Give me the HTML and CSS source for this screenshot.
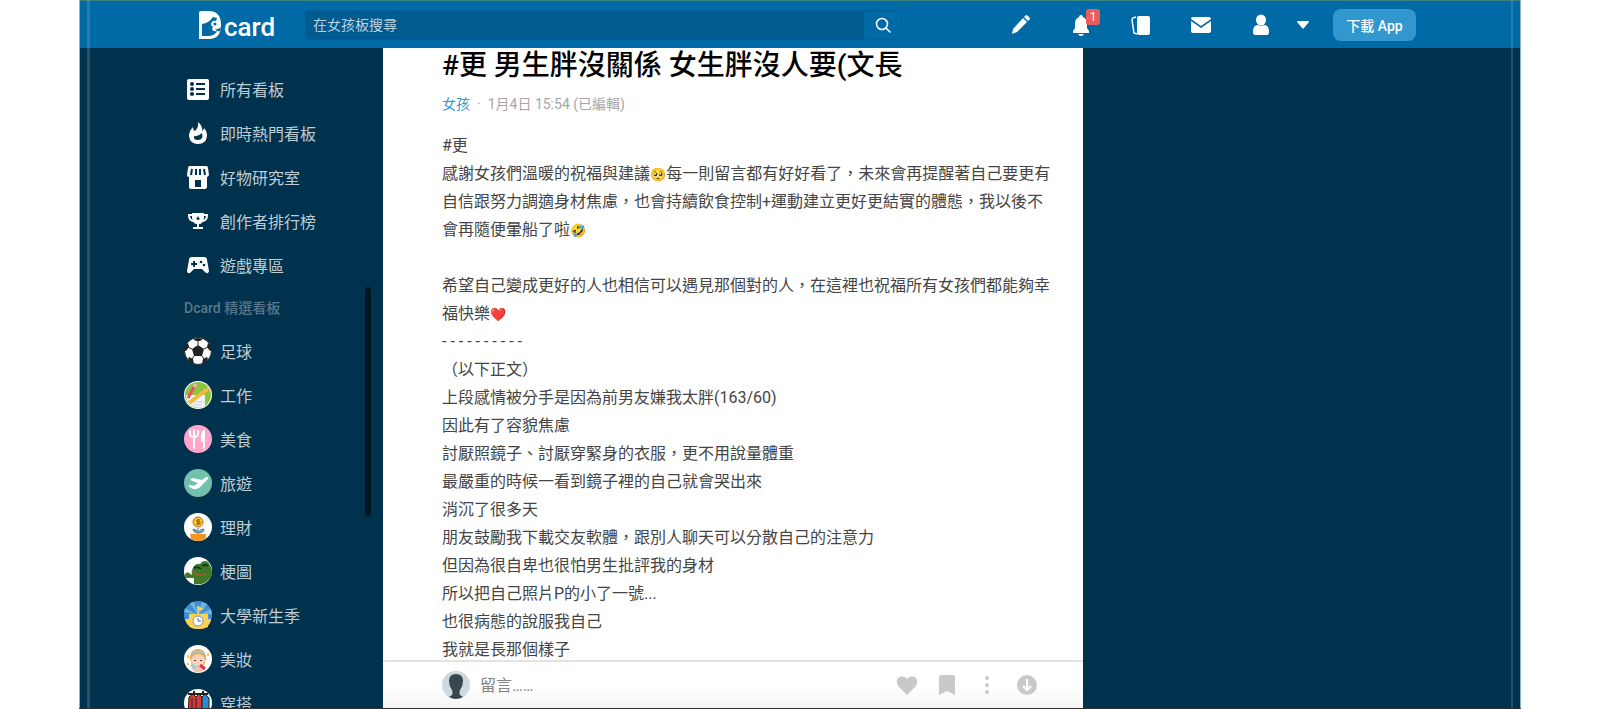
FILE: index.html
```html
<!DOCTYPE html>
<html lang="zh-Hant">
<head>
    <meta charset="UTF-8">
    <meta name="viewport" content="width=device-width, initial-scale=1.0">
    <title>#更 男生胖沒關係 女生胖沒人要(文長 - 女孩板 | Dcard</title>
    <link rel="stylesheet" href="styles.css">
</head>
<body>
<div class="window">
    <header class="topbar">
        <div class="topbar-inner">
            <a class="logo" href="#" aria-label="Dcard">
                <svg width="23" height="28" viewBox="0 0 23 28">
                    <path fill="#fff" d="M2 0H10C18 0 22 5 22 14C22 23 18 28 10 28H0V2Q0 0 2 0Z"/>
                    <path fill="#006aa6" d="M3 13Q10 12 14 6L18 7L17 10Q13 9 12 13Q12 15 14 16L13 18Q14 21 18 20Q16 25 9 25H3Z"/>
                    <circle cx="16" cy="13" r="1.5" fill="#006aa6"/>
                    <path fill="#006aa6" d="M16 18Q19 19 22 16L21 20Q18 21 16 18Z"/>
                </svg>
                <span>card</span>
            </a>
            <form class="search">
                <input type="text" placeholder="在女孩板搜尋" aria-label="在女孩板搜尋">
                <button type="button" aria-label="搜尋">
                    <svg width="16" height="18" viewBox="0 0 16 18" fill="none" stroke="#fff" stroke-width="1.6" stroke-linecap="round"><circle cx="7" cy="8" r="5.5"/><path d="M11 12L15 16"/></svg>
                </button>
            </form>
            <nav class="tools">
                <a href="#" aria-label="發文"><svg viewBox="0 0 24 24"><path d="M3 21L4 16L14 5L18 9L8 19ZM15 4L17 2Q18 2 20 4Q21 5 21 6L19 8Z"/></svg></a>
                <a href="#" aria-label="通知"><svg viewBox="0 0 24 24"><path d="M12 2Q14 2 14 4Q18 6 18 10V15L20 18V20H4V18L6 15V10Q6 6 10 4Q10 2 12 2ZM9 21H15Q14 23 12 23Q10 23 9 21Z"/></svg><span class="badge">1</span></a>
                <a href="#" aria-label="抽卡"><svg viewBox="0 0 24 24"><rect x="8" y="3" width="13" height="19" rx="2"/><path d="M7 4L4 5Q3 5 3 7L5 20L8 21" fill="none" stroke="#fff" stroke-width="1.5"/></svg></a>
                <a href="#" aria-label="來信"><svg viewBox="0 0 24 24"><path d="M2 6Q2 4 4 4H20Q22 4 22 6L12 13ZM2 8L12 15L22 8V18Q22 20 20 20H4Q2 20 2 18Z"/></svg></a>
                <a href="#" aria-label="個人"><svg viewBox="0 0 24 24"><ellipse cx="12" cy="7" rx="5" ry="5.5"/><path d="M4 19Q4 12 9 12Q12 14 15 12Q20 12 20 19Q20 22 18 22H6Q4 22 4 19Z"/></svg></a>
                <button class="caret" type="button" aria-label="更多"><svg viewBox="0 0 12 8"><path d="M1 0H11Q12 0 12 1L7 7Q6 8 5 7L0 1Q0 0 1 0Z"/></svg></button>
                <button class="download" type="button">下載 App</button>
            </nav>
        </div>
    </header>

    <main class="page">
        <aside class="sidebar">
            <ul>
                <li><a href="#"><svg viewBox="0 0 28 28"><rect x="3" y="4" width="22" height="21" rx="2" fill="#fff"/><g fill="#00324e"><circle cx="8" cy="9" r="2"/><circle cx="8" cy="14" r="2"/><circle cx="8" cy="19" r="2"/></g><path d="M12 9H21M12 14H21M12 19H21" stroke="#00324e" stroke-width="2"/></svg>所有看板</a></li>
                <li><a href="#"><svg viewBox="0 0 28 28"><path fill="#fff" d="M14 3Q19 7 18 12Q20 11 20 9Q23 12 23 17Q22 25 14 25Q6 25 5 17Q5 12 9 8Q9 11 11 12Q15 8 14 3Z"/><path fill="#00324e" d="M18 14Q20 21 14 21Q9 21 10 17Q14 18 18 14Z"/></svg>即時熱門看板</a></li>
                <li><a href="#"><svg viewBox="0 0 28 28"><path fill="#fff" d="M6 3H22Q24 3 24 5L25 12Q24 14 23 14V24Q23 26 21 26H7Q5 26 5 24V14Q3 14 3 12L4 5Q4 3 6 3Z"/><path d="M8 6L7 12M12 6V12M16 6V12M20 6L21 12" stroke="#00324e" stroke-width="2"/><path fill="#00324e" d="M11 17H17V24H11Z"/></svg>好物研究室</a></li>
                <li><a href="#"><svg viewBox="0 0 28 28"><path d="M8 8H5Q5 14 10 14M20 8H23Q23 14 18 14" fill="none" stroke="#fff" stroke-width="2"/><path fill="#fff" d="M8 6H20V11Q19 17 15 17V20H19V22H9V20H13V17Q9 17 8 11Z"/><path fill="#00324e" d="M14 9L15 11L16 12L14 13L12 12L13 11Z"/></svg>創作者排行榜</a></li>
                <li><a href="#"><svg viewBox="0 0 28 28"><path fill="#fff" d="M8 6H20Q23 6 23 9L25 20Q24 24 21 21L18 18H10L7 21Q4 24 3 20L5 9Q5 6 8 6Z"/><path d="M7 13H13M10 10V16" stroke="#00324e" stroke-width="2"/><g fill="#00324e"><circle cx="17" cy="11" r="1.3"/><circle cx="20" cy="14" r="1.3"/></g></svg>遊戲專區</a></li>
            </ul>
            <h2>Dcard 精選看板</h2>
            <ul>
                <li><a href="#"><svg viewBox="0 0 28 28"><circle cx="14" cy="14" r="13.5" fill="#fff" stroke="#222"/><path fill="#222" d="M14 8L20 12L18 19H10L8 12ZM9 2L14 1L19 2L16 4H12ZM1 9L4 6L5 10L2 14L0 13ZM27 9L24 6L23 10L26 14L28 13ZM4 22L5 20L9 22L10 27Q6 26 4 22ZM24 22L23 20L19 22L18 27Q22 26 24 22Z"/><path d="M14 3V8M8 12L4 10M20 12L24 10M10 19L8 22M18 19L20 22" stroke="#222" stroke-width="1"/></svg>足球</a></li>
                <li><a href="#"><svg viewBox="0 0 28 28"><circle cx="14" cy="14" r="14" fill="#fff"/><circle cx="14" cy="14" r="13" fill="#8bc53f"/><path fill="#f1f4fa" d="M2 14H21V25Q14 29 6 24Q2 20 2 14Z"/><path d="M9 21H20M9 24H18" stroke="#c5d0e2"/><path d="M4 17L10 6" stroke="#ef4b62" stroke-width="3"/><path d="M10 6L12 3" stroke="#f7b5ba" stroke-width="3"/><path d="M5 22L25 7" stroke="#f5b83d" stroke-width="4"/></svg>工作</a></li>
                <li><a href="#"><svg viewBox="0 0 28 28"><circle cx="14" cy="14" r="14" fill="#ffa6ca"/><path d="M6 6V9Q6 12 10 12Q14 12 14 9V6M10 5V23" fill="none" stroke="#fff" stroke-width="2" stroke-linecap="round"/><path fill="#fff" d="M21 4V23Q21 25 19 23V17H17Q16 6 21 4Z"/></svg>美食</a></li>
                <li><a href="#"><svg viewBox="0 0 28 28"><circle cx="14" cy="14" r="14" fill="#73c1ad"/><path fill="#fff" d="M4 17L7 16L10 17L14 14L6 11L8 9L18 11L22 8Q25 8 24 10L15 19Q9 22 4 17Z"/></svg>旅遊</a></li>
                <li><a href="#"><svg viewBox="0 0 28 28"><circle cx="14" cy="14" r="14" fill="#fff"/><path d="M14 15V22" stroke="#568" stroke-width="1"/><path fill="#57b9c4" stroke="#446" stroke-width=".6" d="M14 20Q9 20 9 16Q13 16 14 20ZM15 20Q15 16 20 16Q20 20 15 20Z"/><circle cx="14" cy="9" r="5" fill="#fcc62d" stroke="#b76b22"/><path d="M16 7H13V9H16V11H12M14 6V12" stroke="#9b5515" fill="none"/><path fill="#f79420" d="M6 21H22V26Q14 30 7 26Z"/></svg>理財</a></li>
                <li><a href="#"><svg viewBox="0 0 28 28"><circle cx="14" cy="14" r="14" fill="#fff"/><path fill="#3f7a26" d="M1 18Q2 14 5 16L8 18Q7 13 10 9Q13 6 16 7Q19 2 24 5Q30 13 27 20Q21 29 10 27V21L2 21Z"/><path d="M8 14Q13 20 22 17" stroke="#a15b3b" stroke-width="1.5" fill="none"/><path d="M10 11Q14 9 17 12M18 9Q21 7 24 9" stroke="#143b16" stroke-width="2" fill="none"/></svg>梗圖</a></li>
                <li><a href="#"><svg viewBox="0 0 28 28"><circle cx="14" cy="14" r="14" fill="#418fd0"/><path fill="#72b5e3" d="M14 14L6 2L10 1ZM14 14L18 1L23 3ZM14 14L0 11L1 7ZM14 14L27 8L28 13Z"/><path d="M14 5V13" stroke="#fff"/><path fill="#fed351" d="M14 5L20 8L14 10ZM5 13H24V26Q14 31 5 24ZM1 18H27Q26 28 14 28Q3 28 1 18Z"/><circle cx="14" cy="20" r="5" fill="#fff" stroke="#7196bd"/><path d="M14 17V20H17" stroke="#446b99" fill="none"/></svg>大學新生季</a></li>
                <li><a href="#"><svg viewBox="0 0 28 28"><circle cx="14" cy="14" r="14" fill="#fff"/><path fill="#f9a23b" d="M6 14Q6 4 14 4Q22 4 22 14L20 20H8Z"/><ellipse cx="14" cy="15" rx="7" ry="6" fill="#fbd2bf"/><path fill="#fbc2ac" d="M11 20H17L21 24Q14 31 7 24Z"/><path d="M7 9Q14 4 21 9" stroke="#8cd2db" stroke-width="2" fill="none"/><path d="M11 15V16M17 15V16" stroke="#633" stroke-width="2"/><path d="M16 20L21 24" stroke="#e5314f" stroke-width="3"/><path d="M7 20L12 23" stroke="#88d3ed" stroke-width="3"/><path d="M4 10V13M24 8V11M4 18V20" stroke="#ffc73d" stroke-width="2"/></svg>美妝</a></li>
                <li><a href="#"><svg viewBox="0 0 28 28"><circle cx="14" cy="14" r="14" fill="#fff"/><path d="M4 5H24M10 5V2M19 5V2" stroke="#222" stroke-width="2"/><path fill="#d63a36" stroke="#222" d="M5 8L9 5L12 8L15 5L18 8V26H4Z"/><path fill="#268bcc" stroke="#222" d="M18 8L21 5L25 9V24H18Z"/><path d="M8 9V25M12 9V25" stroke="#222"/></svg>穿搭</a></li>
            </ul>
            <div class="scrollbar"></div>
        </aside>

        <section class="post">
            <article class="post-content">
                <h1>#更 男生胖沒關係 女生胖沒人要(文長</h1>
                <div class="meta"><a href="#">女孩</a><span>·</span><time>1月4日 15:54 (已編輯)</time></div>
                <div class="text">
                    <p>#更<br>感謝女孩們溫暖的祝福與建議<span class="emoji">🥺</span>每一則留言都有好好看了，未來會再提醒著自己要更有自信跟努力調適身材焦慮，也會持續飲食控制+運動建立更好更結實的體態，我以後不會再隨便暈船了啦<span class="emoji">🤣</span></p>
                    <p>希望自己變成更好的人也相信可以遇見那個對的人，在這裡也祝福所有女孩們都能夠幸福快樂<span class="emoji">❤️</span><br>
                    - - - - - - - - - -<br>
                    （以下正文）<br>
                    上段感情被分手是因為前男友嫌我太胖(163/60)<br>
                    因此有了容貌焦慮<br>
                    討厭照鏡子、討厭穿緊身的衣服，更不用說量體重<br>
                    最嚴重的時候一看到鏡子裡的自己就會哭出來<br>
                    消沉了很多天<br>
                    朋友鼓勵我下載交友軟體，跟別人聊天可以分散自己的注意力<br>
                    但因為很自卑也很怕男生批評我的身材<br>
                    所以把自己照片P的小了一號...<br>
                    也很病態的說服我自己<br>
                    我就是長那個樣子</p>
                </div>
            </article>
            <footer class="reply">
                <svg class="avatar" viewBox="0 0 28 28"><circle cx="14" cy="14" r="14" fill="#cfd8dc"/><path fill="#37474f" d="M14 3Q21 3 21 10Q21 15 18 19Q17 22 18 24L21 26Q14 30 7 26L10 24Q11 22 10 19Q7 15 7 10Q7 3 14 3Z"/></svg>
                <input type="text" placeholder="留言……" aria-label="留言">
                <div class="actions">
                    <button type="button" aria-label="愛心"><svg viewBox="0 0 24 24"><path d="M12 22L4 14Q0 9 3 5Q8 1 12 6Q16 1 21 5Q24 9 20 14Z"/></svg></button>
                    <button type="button" aria-label="收藏"><svg viewBox="0 0 24 24"><path d="M6 2H18Q20 2 20 4V22L12 18L4 22V4Q4 2 6 2Z"/></svg></button>
                    <button type="button" aria-label="更多"><svg viewBox="0 0 24 24"><circle cx="12" cy="5" r="2"/><circle cx="12" cy="12" r="2"/><circle cx="12" cy="19" r="2"/></svg></button>
                    <button type="button" aria-label="跳到底部"><svg viewBox="0 0 24 24"><circle cx="12" cy="12" r="10"/><path d="M12 6V16M8 13L12 17L16 13" fill="none" stroke="#fff" stroke-width="2"/></svg></button>
                </div>
            </footer>
        </section>
    </main>
</div>
</body>
</html>
```

FILE: styles.css
```css
* { box-sizing: border-box; }
body { margin: 0; background: #fff; font-family: Roboto, "Noto Sans CJK TC", sans-serif; font-size: 16px; }
a { color: inherit; text-decoration: none; }
button { padding: 0; border: 0; background: none; color: inherit; font: inherit; cursor: pointer; }
ul { list-style: none; margin: 0; padding: 0; }

.window { position: relative; display: flex; flex-direction: column; height: 100vh; margin: 0 79px; overflow: hidden; background: #00324e; border-bottom: 1px solid #2b3136; }
.window::before, .window::after { content: ""; position: absolute; top: 0; bottom: 0; width: 7px; }
.window::before { left: 0; border-left: 1px solid #8db0c5; border-right: 3px solid rgba(160, 180, 190, 0.25); }
.window::after { right: 0; border-right: 1px solid #8db0c5; border-left: 2px solid rgba(160, 180, 190, 0.25); }

.topbar { flex: none; height: 48px; background: #006aa6; border-top: 1px solid #3c827c; }
.topbar-inner { display: flex; align-items: center; max-width: 1232px; height: 100%; margin: 0 auto; }
.logo { display: flex; align-items: center; width: 121px; padding-left: 15px; color: #fff; }
.logo span { padding: 5px 0 0 2px; font-size: 26px; line-height: 26px; font-weight: 500; }
.search { display: flex; flex: 1; max-width: 597px; height: 30px; border: 1px solid #00609a; border-radius: 4px; overflow: hidden; }
.search input { flex: 1; min-width: 0; padding: 0 7px; border: 0; outline: 0; background: #005b8e; color: #fff; font: inherit; font-size: 14px; }
.search input::placeholder { color: #b8d1e1; opacity: 1; }
.search button { display: flex; align-items: center; justify-content: center; width: 37px; }
.tools { display: flex; align-items: center; gap: 36px; margin-left: auto; color: #fff; }
.tools a { position: relative; height: 24px; }
.tools svg { display: block; width: 24px; height: 24px; fill: #fff; }
.badge { position: absolute; top: -4px; right: -7px; width: 14px; border-radius: 3px; background: #ea5c5c; font-size: 12px; line-height: 16px; text-align: center; }
.tools .caret { margin: 0 -12px; }
.tools .caret svg { width: 12px; height: 8px; }
.download { width: 83px; height: 32px; border-radius: 8px; background: #3397cf; font-size: 14px; font-weight: 500; }

.page { display: flex; flex: 1; width: 100%; max-width: 1232px; min-height: 0; margin: 0 auto; }
.sidebar { position: relative; flex: none; width: 199px; padding-top: 19px; overflow: hidden; color: #bfccd3; }
.sidebar li a { display: flex; align-items: center; gap: 8px; height: 44px; }
.sidebar li svg { flex: none; width: 28px; height: 28px; }
.sidebar h2 { margin: 0; color: #597789; font-size: 14px; line-height: 42px; font-weight: 500; }
.scrollbar { position: absolute; top: 239px; right: 12px; width: 6px; height: 229px; border-radius: 3px; background: #001624; }

.post { display: flex; flex-direction: column; width: 700px; background: #fff; }
.post-content { flex: 1; min-height: 0; padding: 0 30px 0 59px; overflow: hidden; }
.post h1 { margin: 0 0 10px; color: #000; font-size: 28px; line-height: 36px; font-weight: 500; }
.meta { display: flex; gap: 7px; margin-bottom: 18px; color: #a6a6a6; font-size: 14px; line-height: 20px; }
.meta a { color: #3397cf; }
.text { color: #454545; line-height: 28px; }
.text p { margin: 0 0 28px; }
.emoji { font-family: "Noto Color Emoji", sans-serif; font-size: 13px; line-height: 1; }

.reply { display: flex; flex: none; align-items: center; height: 48px; padding: 0 44px 0 59px; border-top: 2px solid #e3e3e3; background: linear-gradient(#fff 50%, #f5f5f5); }
.avatar { width: 28px; height: 28px; }
.reply input { flex: 1; min-width: 0; margin-left: 10px; padding: 0; border: 0; outline: 0; background: none; font: inherit; }
.reply input::placeholder { color: #858585; opacity: 1; }
.actions { display: flex; gap: 16px; }
.actions svg { display: block; width: 24px; height: 24px; fill: #c9c9c9; }
```
